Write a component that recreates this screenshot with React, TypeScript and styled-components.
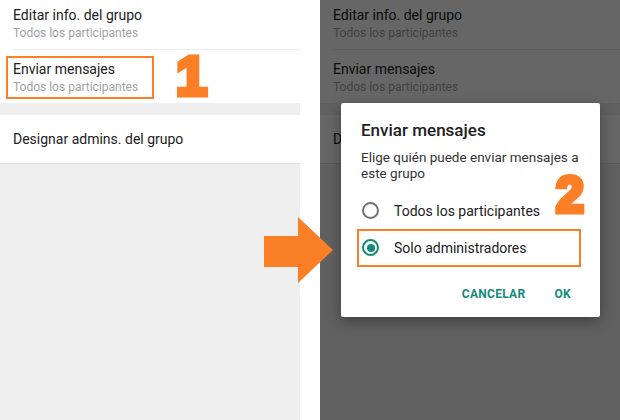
import styled, { createGlobalStyle } from "styled-components";

const GlobalStyle = createGlobalStyle`
  html, body {
    margin: 0;
    padding: 0;
    background: #ffffff;
  }
  body {
    font-family: Roboto, "Noto Sans", "Liberation Sans", sans-serif;
    -webkit-font-smoothing: antialiased;
  }
`;

const ORANGE = "#fb7f26";
const TEAL = "#138a7a";

const Page = styled.div`
  position: relative;
  display: grid;
  grid-template-columns: 300px 300px;
  column-gap: 20px;
  width: 620px;
  height: 420px;
  overflow: hidden;
  background: #ffffff;
`;

const Panel = styled.div`
  position: relative;
  height: 100%;
  background: #efeff0;
  overflow: hidden;
`;

const Section = styled.div`
  background: #ffffff;
`;

const Spacer = styled.div`
  height: 12px;
`;

const Row = styled.div<{ $first?: boolean }>`
  position: relative;
  display: flex;
  flex-direction: column;
  padding: ${({ $first }) => ($first ? "5px" : "9px")} 13px 8px;
`;

const Divider = styled.div`
  height: 1px;
  margin-left: 13px;
  background: #ececec;
`;

const SingleRow = styled.div`
  display: flex;
  align-items: center;
  height: 48px;
  padding: 0 13px;
  border-bottom: 1px solid #dedede;
  background: #ffffff;
`;

const RowTitle = styled.div`
  font-size: 14px;
  line-height: 20px;
  color: #212121;
`;

const RowSubtitle = styled.div`
  font-size: 12px;
  line-height: 16px;
  color: #a2a2a2;
`;

const RowHighlight = styled.span`
  position: absolute;
  top: 6px;
  left: 6px;
  width: 148px;
  height: 43px;
  box-sizing: border-box;
  border: 2px solid ${ORANGE};
`;

const Step = styled.span<{ $size: number }>`
  position: absolute;
  font-family: "Liberation Sans", Arial, sans-serif;
  font-weight: 700;
  font-size: ${({ $size }) => $size}px;
  line-height: 1;
  color: ${ORANGE};
  -webkit-text-stroke: 5px ${ORANGE};
`;

const StepOne = styled(Step)`
  top: 48px;
  left: 176px;
`;

const StepTwo = styled(Step)`
  top: 170px;
  left: 236px;
`;

const Scrim = styled.div`
  position: absolute;
  inset: 0;
  background: rgba(0, 0, 0, 0.6);
  padding: 103px 0 0 21px;
`;

const Dialog = styled.div`
  position: relative;
  width: 259px;
  height: 214px;
  box-sizing: border-box;
  padding-top: 16px;
  background: #ffffff;
  border-radius: 2px;
  box-shadow: 0 4px 14px rgba(0, 0, 0, 0.35);
`;

const DialogTitle = styled.div`
  padding: 0 20px;
  font-size: 17px;
  line-height: 22px;
  font-weight: 500;
  color: #212121;
`;

const DialogBody = styled.div`
  margin-top: 8px;
  padding: 0 20px;
  font-size: 13.5px;
  line-height: 16px;
  white-space: nowrap;
  color: #333333;
`;

const Options = styled.div`
  margin-top: 11px;
  display: flex;
  flex-direction: column;
`;

const Option = styled.label`
  position: relative;
  display: flex;
  align-items: center;
  gap: 15px;
  height: 37px;
  padding-left: 21px;
  font-size: 14px;
  color: #212121;
`;

const Radio = styled.span<{ $checked?: boolean }>`
  position: relative;
  width: 17px;
  height: 17px;
  box-sizing: border-box;
  border-radius: 50%;
  border: 2px solid ${({ $checked }) => ($checked ? TEAL : "#747474")};

  &::after {
    content: "";
    display: ${({ $checked }) => ($checked ? "block" : "none")};
    position: absolute;
    inset: 2.5px;
    border-radius: 50%;
    background: ${TEAL};
  }
`;

const OptionHighlight = styled.span`
  position: absolute;
  top: 0;
  bottom: -1px;
  left: 16px;
  right: 19px;
  border: 2px solid ${ORANGE};
`;

const Footer = styled.div`
  margin-top: 10px;
  display: flex;
  justify-content: flex-end;
  align-items: center;
  gap: 13px;
  height: 36px;
  padding-right: 21px;
`;

const TextButton = styled.button`
  border: 0;
  background: none;
  padding: 0 8px;
  height: 36px;
  font-family: Roboto, "Noto Sans", sans-serif;
  font-size: 12px;
  font-weight: 700;
  letter-spacing: 0.3px;
  text-transform: uppercase;
  color: ${TEAL};
`;

const Arrow = styled.svg`
  position: absolute;
  top: 217px;
  left: 264px;
`;

const SettingsList = ({ highlight = false }: { highlight?: boolean }) => (
  <>
    <Section>
      <Row $first>
        <RowTitle>Editar info. del grupo</RowTitle>
        <RowSubtitle>Todos los participantes</RowSubtitle>
      </Row>
      <Divider />
      <Row>
        <RowTitle>Enviar mensajes</RowTitle>
        <RowSubtitle>Todos los participantes</RowSubtitle>
        {highlight && <RowHighlight />}
      </Row>
    </Section>
    <Spacer />
    <SingleRow>
      <RowTitle>Designar admins. del grupo</RowTitle>
    </SingleRow>
  </>
);

const App = () => {
  return (
    <>
      <GlobalStyle />
      <Page>
        <Panel>
          <SettingsList highlight />
          <StepOne $size={56}>1</StepOne>
        </Panel>
        <Panel>
          <SettingsList />
          <Scrim>
            <Dialog>
              <DialogTitle>Enviar mensajes</DialogTitle>
              <DialogBody>
                Elige quién puede enviar mensajes a
                <br />
                este grupo
              </DialogBody>
              <Options>
                <Option>
                  <Radio />
                  Todos los participantes
                </Option>
                <Option>
                  <Radio $checked />
                  Solo administradores
                  <OptionHighlight />
                </Option>
              </Options>
              <Footer>
                <TextButton>Cancelar</TextButton>
                <TextButton>OK</TextButton>
              </Footer>
            </Dialog>
            <StepTwo $size={50}>2</StepTwo>
          </Scrim>
        </Panel>
        <Arrow width="70" height="67" viewBox="0 0 70 67">
          <polygon
            points="0,19 34,19 34,0 69,33 34,66 34,50 0,50"
            fill={ORANGE}
          />
        </Arrow>
      </Page>
    </>
  );
};

export default App;
